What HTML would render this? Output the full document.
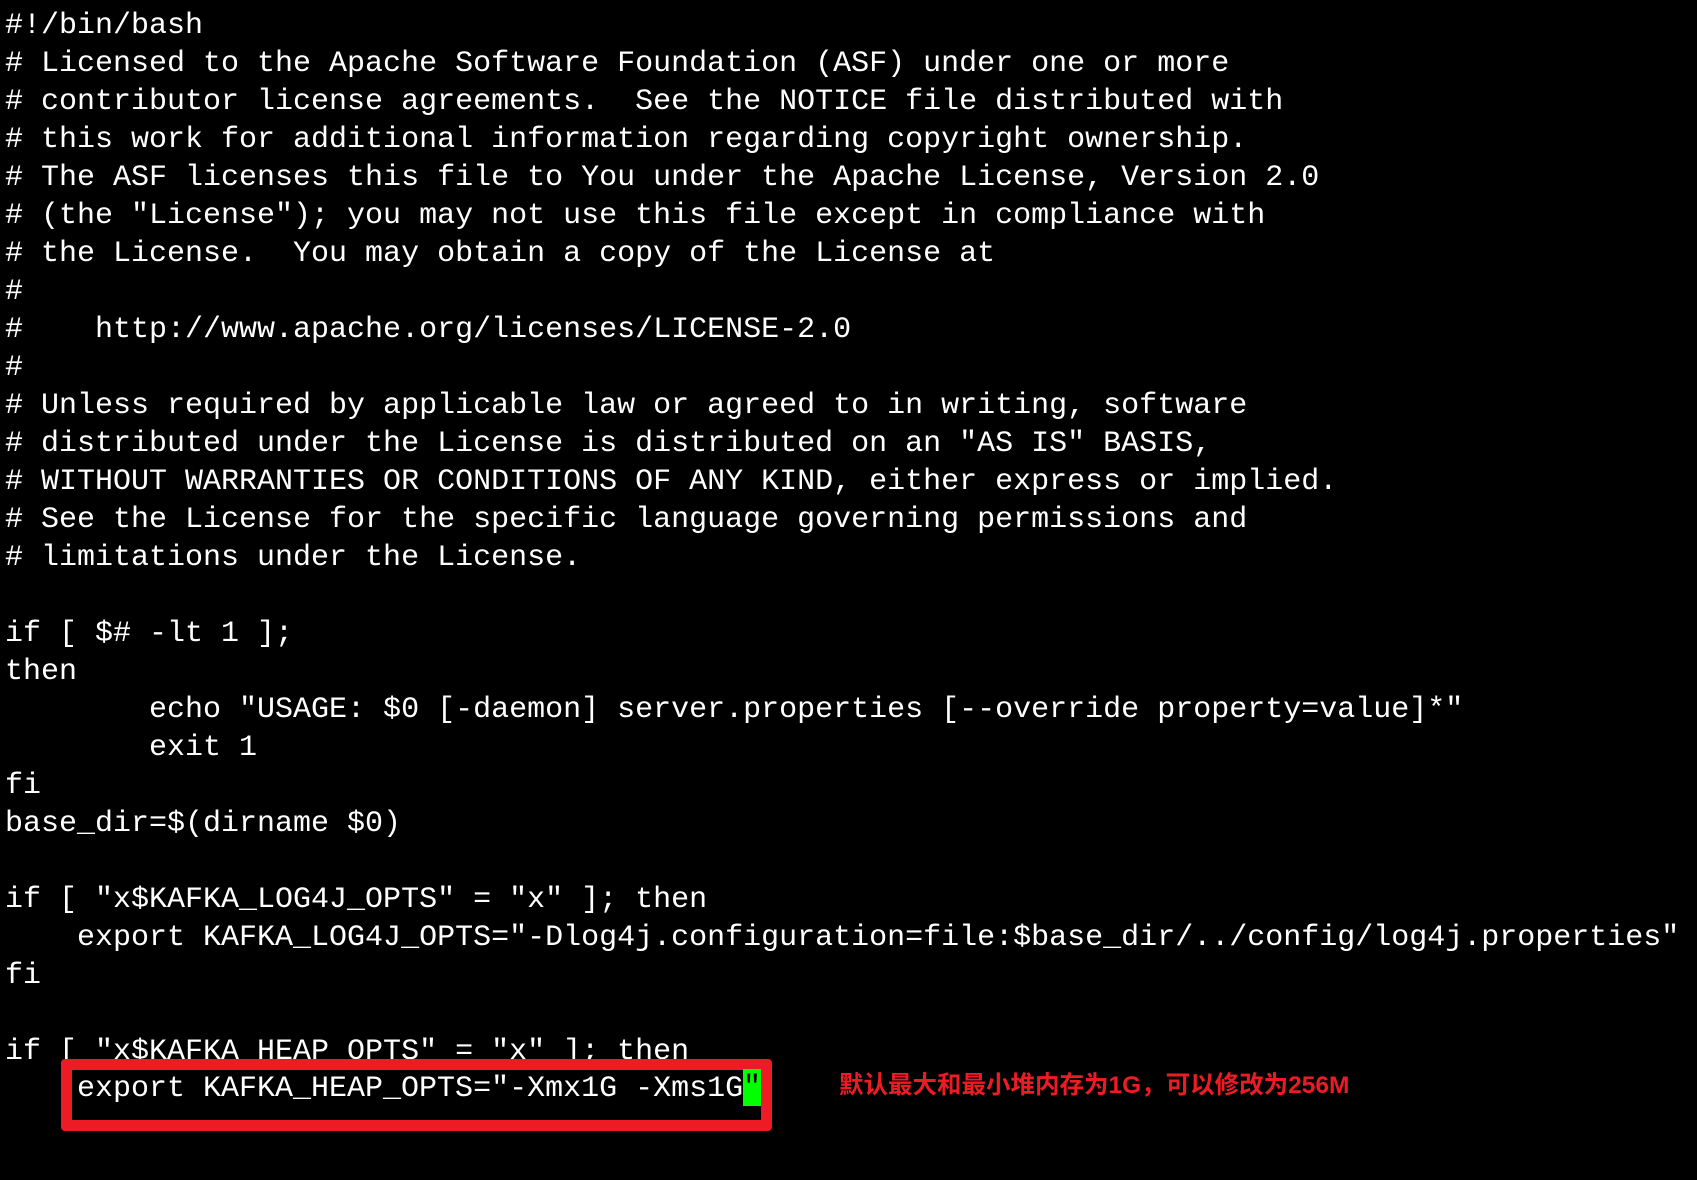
<!DOCTYPE html>
<html><head><meta charset="utf-8"><style>
html,body{margin:0;padding:0;background:#000;width:1697px;height:1180px;overflow:hidden;position:relative}
pre{margin:0;position:absolute;left:5px;top:7px;font-family:"Liberation Mono",monospace;font-size:30px;line-height:38px;color:#fff;white-space:pre}
.box{position:absolute;left:61px;top:1059px;width:689px;height:50px;border:11px solid #ed1c24;border-radius:4px;background:#000}
.box span{position:absolute;left:5px;top:0px;font-family:"Liberation Mono",monospace;font-size:30px;line-height:38px;color:#fff;white-space:pre}
.cur{position:absolute;left:743px;top:1069px;width:18px;height:37px;background:#00ff00;color:#000;font-family:"Liberation Mono",monospace;font-size:30px;line-height:38px}
.note{position:absolute;left:839px;top:1066px;font-family:"Liberation Sans","Noto Sans CJK SC",sans-serif;font-weight:bold;font-size:24.5px;color:#ed1c24;white-space:nowrap}
</style></head><body>
<pre>#!/bin/bash
# Licensed to the Apache Software Foundation (ASF) under one or more
# contributor license agreements.  See the NOTICE file distributed with
# this work for additional information regarding copyright ownership.
# The ASF licenses this file to You under the Apache License, Version 2.0
# (the "License"); you may not use this file except in compliance with
# the License.  You may obtain a copy of the License at
#
#    http://www.apache.org/licenses/LICENSE-2.0
#
# Unless required by applicable law or agreed to in writing, software
# distributed under the License is distributed on an "AS IS" BASIS,
# WITHOUT WARRANTIES OR CONDITIONS OF ANY KIND, either express or implied.
# See the License for the specific language governing permissions and
# limitations under the License.

if [ $# -lt 1 ];
then
        echo "USAGE: $0 [-daemon] server.properties [--override property=value]*"
        exit 1
fi
base_dir=$(dirname $0)

if [ "x$KAFKA_LOG4J_OPTS" = "x" ]; then
    export KAFKA_LOG4J_OPTS="-Dlog4j.configuration=file:$base_dir/../config/log4j.properties"
fi

if [ "x$KAFKA_HEAP_OPTS" = "x" ]; then</pre>
<div class="box"><span>export KAFKA_HEAP_OPTS="-Xmx1G -Xms1G</span></div>
<div class="cur">"</div>
<div class="note">默认最大和最小堆内存为1G，可以修改为256M</div>
</body></html>
